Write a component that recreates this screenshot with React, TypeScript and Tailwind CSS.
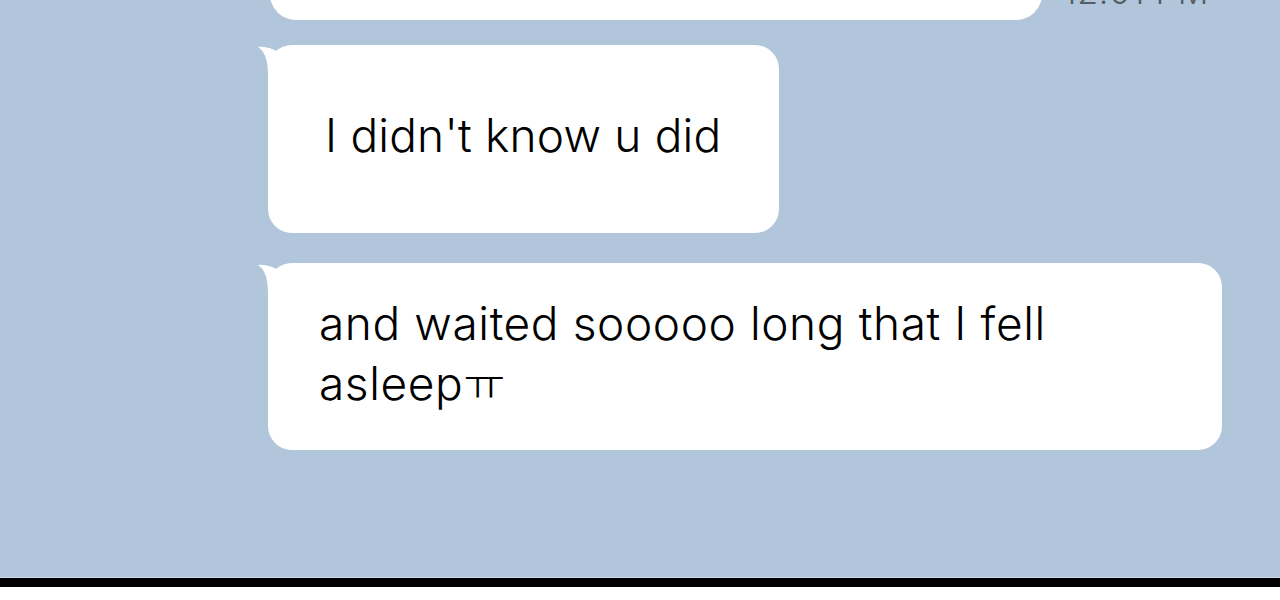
import React from "react";

function Tail() {
  return (
    <svg
      className="absolute left-[-11px] top-[1px]"
      width="30"
      height="32"
      viewBox="0 0 30 32"
    >
      <path
        d="M1 1 C7 0 15 2 23 7 L23 30 L11 30 C11 17 9 6 1 1 Z"
        fill="#ffffff"
      />
    </svg>
  );
}

export default function App() {
  return (
    <div
      className="w-[1280px] h-[600px] flex flex-col bg-white overflow-hidden"
      style={{ fontFamily: "Inter, 'Noto Sans CJK KR', sans-serif" }}
    >
      <div className="h-[577px] bg-[#b1c6db] overflow-hidden flex flex-col pl-[268px]">
        <div className="flex items-end mt-[-160px]">
          <div className="w-[772px] h-[180px] bg-white rounded-[26px] ml-[2px]" />
          <div className="ml-[21px] mb-[8px] text-[34px] leading-[40px] text-[#555c63] font-light tracking-[0.8px]">
            12:01 PM
          </div>
        </div>

        <div className="relative mt-[25px] w-[511px] h-[188px] bg-white rounded-[24px] flex items-center pl-[57px] pb-[8px]">
          <Tail />
          <span className="text-[46px] leading-[60px] text-black font-light tracking-[0.2px]">
            I didn't know u did
          </span>
        </div>

        <div className="relative mt-[30px] w-[954px] h-[187px] bg-white rounded-[24px] pl-[51px] pt-[30px]">
          <Tail />
          <p className="text-[46px] leading-[60px] text-black font-light tracking-[0.6px]">
            and waited sooooo long that I fell
            <br />
            asleepㅠ
          </p>
        </div>
      </div>
      <div className="h-[1px] bg-[#cdd7ea]" />
      <div className="h-[9px] bg-black" />
      <div className="flex-1 bg-white" />
    </div>
  );
}
